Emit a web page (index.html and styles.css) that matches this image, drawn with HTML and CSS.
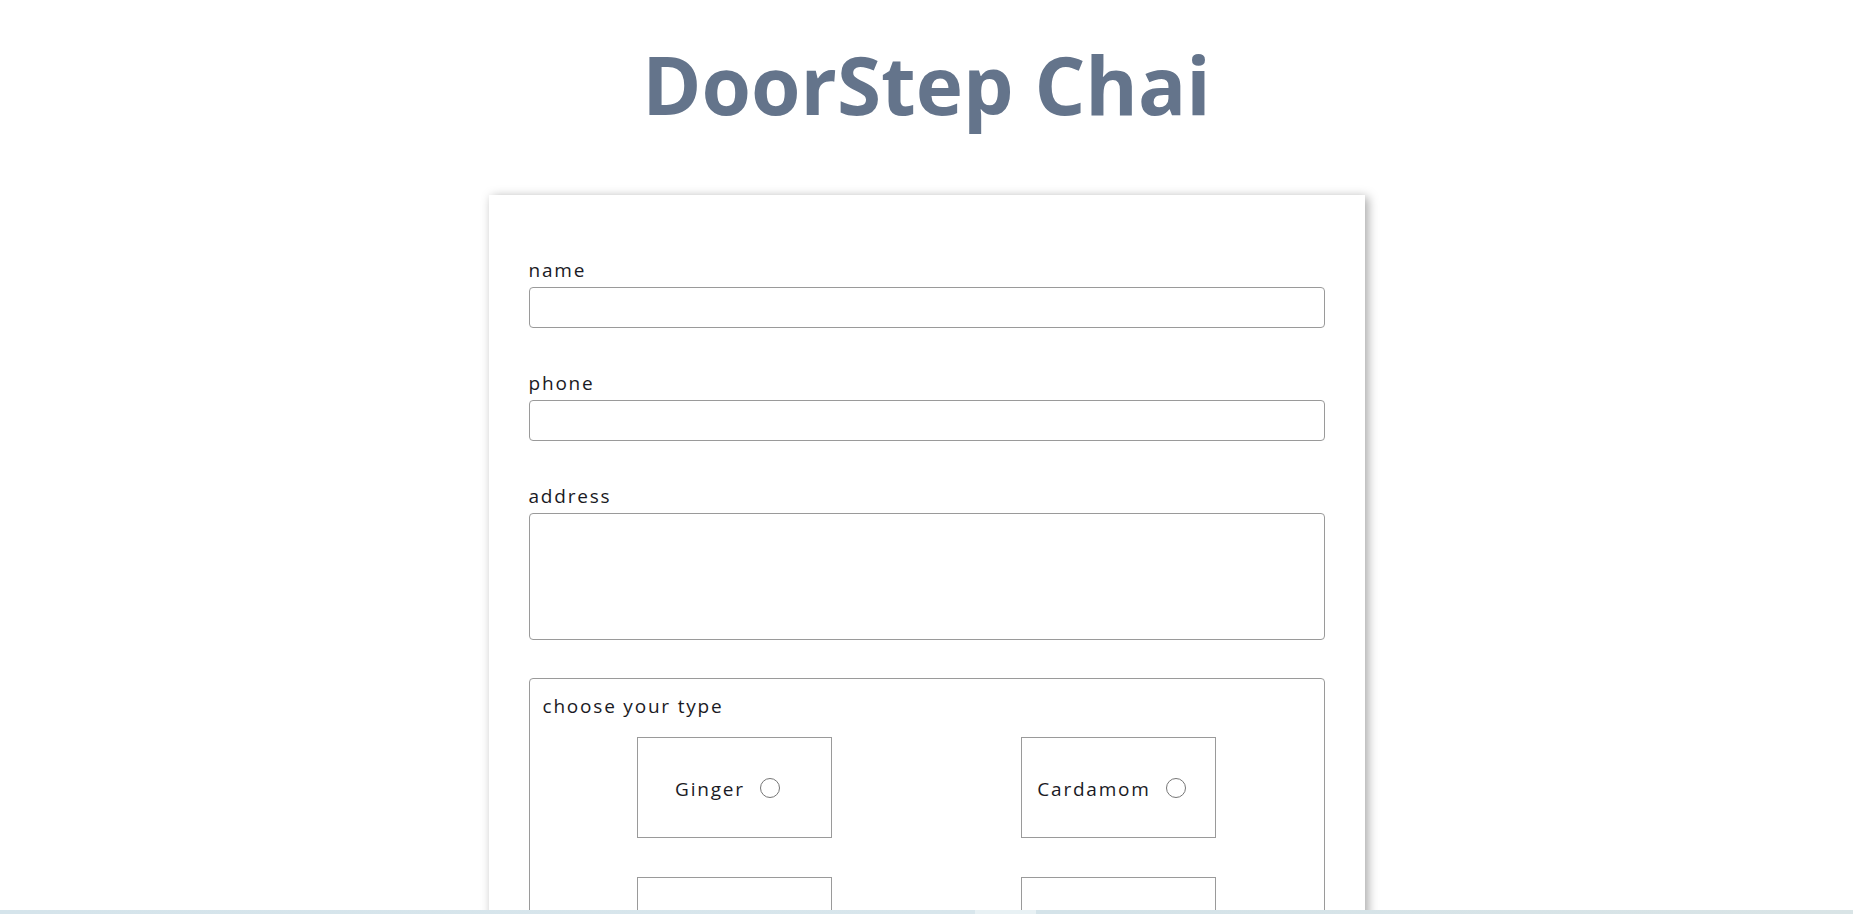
FILE: index.html
```html
<!DOCTYPE html>
<html lang="en">
<head>
<meta charset="utf-8">
<title>DoorStep Chai</title>
<link rel="stylesheet" href="styles.css">
</head>
<body>
<h1 class="title">DoorStep Chai</h1>
<main class="card">
  <form class="order-form">
    <div class="field">
      <label class="field-label" for="name">name</label>
      <input class="text-input" id="name" type="text">
    </div>
    <div class="field">
      <label class="field-label" for="phone">phone</label>
      <input class="text-input" id="phone" type="tel">
    </div>
    <div class="field field-last">
      <label class="field-label" for="address">address</label>
      <textarea class="text-area" id="address"></textarea>
    </div>
    <div class="type-box">
      <p class="type-title">choose your type</p>
      <div class="type-grid">
        <label class="type-option"><span class="type-name">Ginger</span><input class="type-radio" type="radio" name="type" value="ginger"></label>
        <label class="type-option"><span class="type-name">Cardamom</span><input class="type-radio" type="radio" name="type" value="cardamom"></label>
        <label class="type-option"><input class="type-radio" type="radio" name="type" value="masala" aria-label="Masala"></label>
        <label class="type-option"><input class="type-radio" type="radio" name="type" value="plain" aria-label="Plain"></label>
      </div>
    </div>
  </form>
</main>
<div class="bottom-band"></div>
</body>
</html>
```
FILE: styles.css
```css
html, body {
  margin: 0;
  padding: 0;
  background: #ffffff;
}

body {
  font-family: "Open Sans", "Noto Sans", sans-serif;
  color: #1a1a24;
}

.title {
  margin: 29px 0 56px;
  font-size: 80px;
  line-height: 110px;
  font-weight: 700;
  text-align: center;
  color: #64748b;
  letter-spacing: 0;
}

.card {
  box-sizing: border-box;
  width: 876px;
  margin: 0 auto;
  padding: 62px 40px 60px 40px;
  background: #ffffff;
  box-shadow: 3px 2px 10px rgba(0, 0, 0, 0.35);
}

.order-form {
  display: flex;
  flex-direction: column;
}

.field {
  display: flex;
  flex-direction: column;
  margin-bottom: 42px;
}

.field-last {
  margin-bottom: 38px;
}

.field-label {
  font-size: 19px;
  line-height: 26px;
  letter-spacing: 1.8px;
  margin-bottom: 4px;
}

.text-input,
.text-area {
  display: block;
  box-sizing: border-box;
  width: 100%;
  margin: 0;
  border: 1px solid #9a9a9a;
  border-radius: 4px;
  background: #fff;
  font: inherit;
  outline: none;
}

.text-input {
  height: 41px;
}

.text-area {
  height: 127px;
  resize: none;
}

.type-box {
  box-sizing: border-box;
  border: 1px solid #9a9a9a;
  border-radius: 4px;
  padding: 14px 13px 40px;
}

.type-title {
  margin: 0 0 18px;
  font-size: 19px;
  line-height: 26px;
  letter-spacing: 1.8px;
}

.type-grid {
  display: grid;
  grid-template-columns: 1fr 1fr;
  row-gap: 39px;
  justify-items: center;
}

.type-option {
  box-sizing: border-box;
  width: 195px;
  height: 101px;
  border: 1px solid #9a9a9a;
  display: flex;
  align-items: center;
  justify-content: center;
}

.type-name {
  font-size: 19px;
  line-height: 26px;
  letter-spacing: 1.8px;
  margin-top: 3px;
}

.type-radio {
  appearance: none;
  -webkit-appearance: none;
  box-sizing: border-box;
  width: 20px;
  height: 20px;
  margin: 0 14px 0 15px;
  border: 1px solid #767676;
  border-radius: 50%;
  background: #fff;
}

.bottom-band {
  position: fixed;
  left: 0;
  right: 0;
  bottom: 0;
  height: 4px;
  background: linear-gradient(to right, #d5e4eb 0, #d8e6ec 975px, #e8f1f4 975px, #e8f1f4 1036px, #d4e3e9 1036px, #d9e4e6 100%);
}
```
